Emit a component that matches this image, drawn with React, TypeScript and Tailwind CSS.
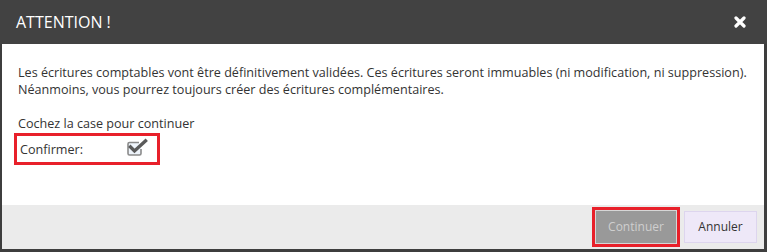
import React from "react";

const font = { fontFamily: '"Open Sans", "Liberation Sans", sans-serif' };

function CheckSquareIcon() {
  return (
    <svg width="22" height="18" viewBox="0 0 22 18" aria-hidden="true">
      <path
        d="M13 4.5 H3.5 A1.5 1.5 0 0 0 2 6 V15.5 A1.5 1.5 0 0 0 3.5 17 H13.5 A1.5 1.5 0 0 0 15 15.5 V11"
        fill="#eef4fb"
        stroke="#8a8a8a"
        strokeWidth="1.6"
      />
      <path
        d="M4.5 9 L8.5 13 L19.5 3"
        fill="none"
        stroke="#5a5a5a"
        strokeWidth="3.4"
        strokeLinecap="square"
        strokeLinejoin="miter"
      />
    </svg>
  );
}

function CloseIcon() {
  return (
    <svg width="12" height="12" viewBox="0 0 12 12" aria-hidden="true">
      <path
        d="M2 2 L10 10 M10 2 L2 10"
        stroke="#ffffff"
        strokeWidth="3.2"
        strokeLinecap="round"
      />
    </svg>
  );
}

export default function App() {
  return (
    <div
      className="w-[767px] h-[252px] bg-[#3e3e3e] flex flex-col"
      style={font}
    >
      <div className="h-[44px] bg-[#424242] flex items-center justify-between pl-[16px] pr-[21px] shrink-0">
        <span className="text-white text-[16px] leading-none">ATTENTION !</span>
        <CloseIcon />
      </div>
      <div className="flex-1 flex flex-col ml-[2px] mr-[3px] mb-[3px]">
        <div className="h-[161px] bg-white pl-[16px] pt-[20px] text-[12.6px] leading-[17px] text-[#333333]">
          <p>
            Les écritures comptables vont être définitivement validées. Ces écritures seront immuables (ni modification, ni suppression).
          </p>
          <p>Néanmoins, vous pourrez toujours créer des écritures complémentaires.</p>
          <p className="mt-[17px]">Cochez la case pour continuer</p>
          <div className="-ml-[4px] mt-[1px] w-[146px] h-[32px] border-[3px] border-[#e8202a] flex items-center pl-[3px]">
            <span className="w-[106px]">Confirmer:</span>
            <span className="flex items-center -mt-[4px]">
              <CheckSquareIcon />
            </span>
          </div>
        </div>
        <div className="flex-1 bg-[#ebebeb] flex items-center justify-end pr-[7px] text-[12px]">
          <div className="border-[3px] border-[#e8202a]">
            <button className="w-[82px] h-[34px] bg-[#999999] border border-[#d6d6d6] text-[#cfcfcf]">
              Continuer
            </button>
          </div>
          <button className="ml-[4px] w-[73px] h-[32px] bg-[#eee8f8] border border-[#ddd5ee] text-[#333333]">
            Annuler
          </button>
        </div>
      </div>
    </div>
  );
}
